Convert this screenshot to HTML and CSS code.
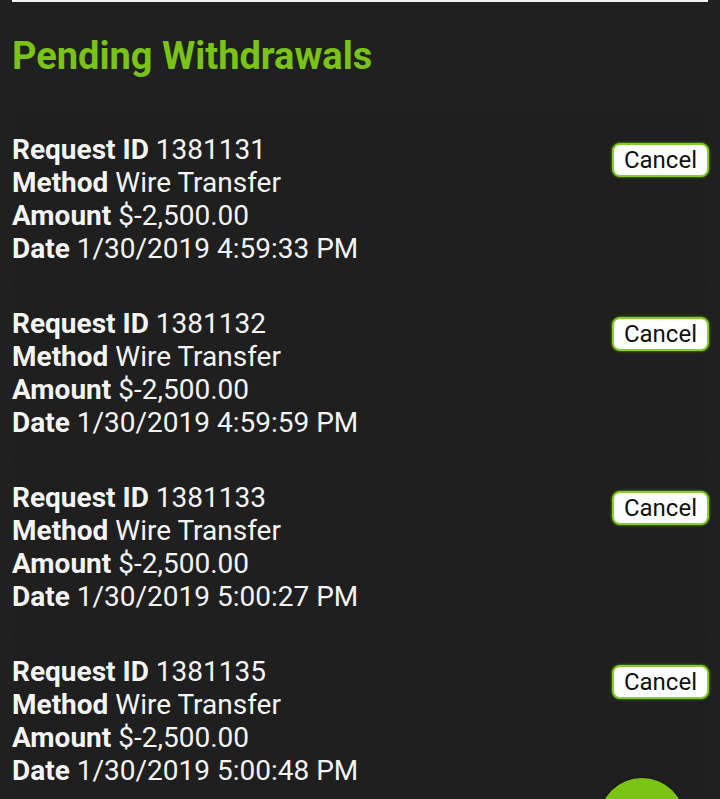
FILE: index.html
```html
<!DOCTYPE html>
<html>
<head>
<meta charset="utf-8">
<title>Pending Withdrawals</title>
<link rel="stylesheet" href="styles.css">
</head>
<body>
<div class="page">
	<div class="top_rule"></div>
	<h1 class="title">Pending Withdrawals</h1>

	<div class="withdraw_list">
		<div class="withdraw_item">
			<dl class="withdraw_info">
				<div><dt>Request ID</dt> <dd>1381131</dd></div>
				<div><dt>Method</dt> <dd>Wire Transfer</dd></div>
				<div><dt>Amount</dt> <dd>$-2,500.00</dd></div>
				<div><dt>Date</dt> <dd>1/30/2019 4:59:33 PM</dd></div>
			</dl>
			<button class="cancel_btn">Cancel</button>
		</div>
		<div class="withdraw_item">
			<dl class="withdraw_info">
				<div><dt>Request ID</dt> <dd>1381132</dd></div>
				<div><dt>Method</dt> <dd>Wire Transfer</dd></div>
				<div><dt>Amount</dt> <dd>$-2,500.00</dd></div>
				<div><dt>Date</dt> <dd>1/30/2019 4:59:59 PM</dd></div>
			</dl>
			<button class="cancel_btn">Cancel</button>
		</div>
		<div class="withdraw_item">
			<dl class="withdraw_info">
				<div><dt>Request ID</dt> <dd>1381133</dd></div>
				<div><dt>Method</dt> <dd>Wire Transfer</dd></div>
				<div><dt>Amount</dt> <dd>$-2,500.00</dd></div>
				<div><dt>Date</dt> <dd>1/30/2019 5:00:27 PM</dd></div>
			</dl>
			<button class="cancel_btn">Cancel</button>
		</div>
		<div class="withdraw_item">
			<dl class="withdraw_info">
				<div><dt>Request ID</dt> <dd>1381135</dd></div>
				<div><dt>Method</dt> <dd>Wire Transfer</dd></div>
				<div><dt>Amount</dt> <dd>$-2,500.00</dd></div>
				<div><dt>Date</dt> <dd>1/30/2019 5:00:48 PM</dd></div>
			</dl>
			<button class="cancel_btn">Cancel</button>
		</div>
	</div>
</div>

<div class="fab"></div>
</body>
</html>
```

FILE: styles.css
```css
*{ margin:0; padding:0; box-sizing:border-box;}
html,body{
	background:#202020;
	height:100%;
	overflow:hidden;
}
body{
	font-family:Roboto, "Liberation Sans", sans-serif;
	color:#f4f4f4;
}
.page{
	padding:0 12px;
}
.top_rule{
	height:2px;
	background:#f2f2f2;
}
.title{
	margin-top:33px;
	font-size:38px;
	line-height:42px;
	font-weight:700;
	color:#79c414;
}
.withdraw_list{
	margin-top:35px;
}
.withdraw_item{
	display:flex;
	justify-content:space-between;
	align-items:flex-start;
	padding:21px 0;
	background:#1f1f1f;
}
.withdraw_item + .withdraw_item{
	box-shadow:inset 0 1px 0 #1c1c1c;
}
.withdraw_info{
	font-size:28px;
	line-height:33px;
}
.withdraw_info dt,
.withdraw_info dd{
	display:inline;
}
.withdraw_info dt{
	font-weight:700;
}
.cancel_btn{
	margin-top:10px;
	margin-right:-1px;
	height:34px;
	padding:0 10px;
	font:24px/30px Roboto, "Liberation Sans", sans-serif;
	color:#111;
	background:#fff;
	border:2px solid #86cc2a;
	border-radius:8px;
	box-shadow:0 0 2px 1px #3f6610;
}
.fab{
	position:fixed;
	left:599px;
	top:778px;
	width:86px;
	height:86px;
	border-radius:50%;
	background:#79c414;
	box-shadow:0 0 3px #111;
}
```
